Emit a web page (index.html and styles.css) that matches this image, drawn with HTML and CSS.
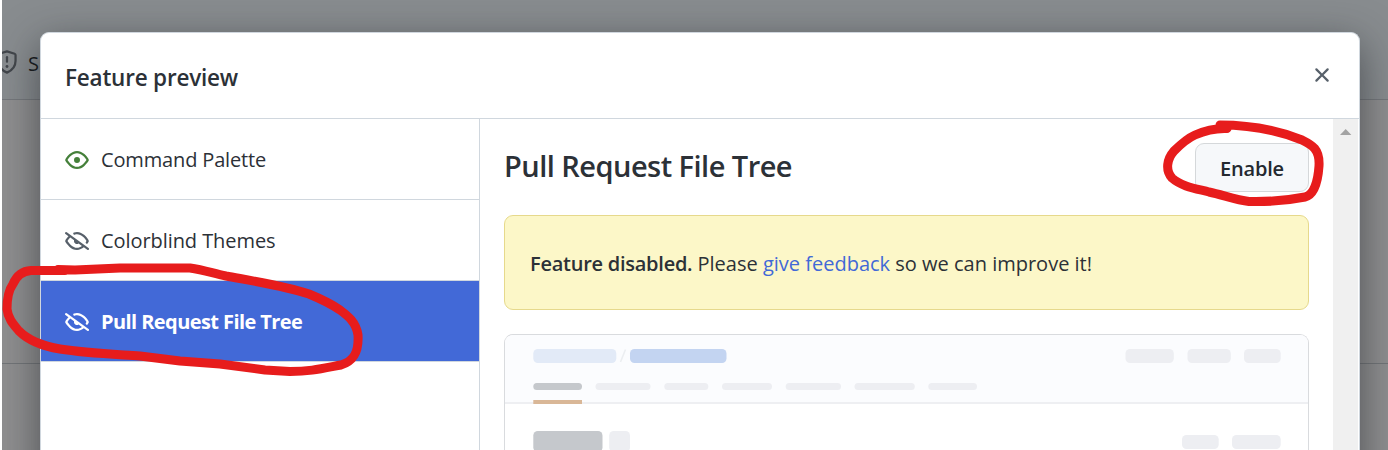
FILE: index.html
```html
<!DOCTYPE html>
<html lang="en">
<head>
<meta charset="utf-8">
<title>Feature preview</title>
<link rel="stylesheet" href="styles.css">
</head>
<body>
<div class="page">
  <div class="repo-nav">
    <svg class="shield" width="24" height="24" viewBox="0 0 16 16" fill="none" stroke="currentColor" stroke-width="1.5" stroke-linecap="round"><path d="M8 .9 13.1 2.5Q13.7 2.7 13.7 3.4V7.2C13.7 10.8 11.5 13.6 8 15.1 4.5 13.6 2.3 10.8 2.3 7.2V3.4Q2.3 2.7 2.9 2.5Z" stroke-linejoin="round"/><path d="M8 4.8V7.8"/><path d="M8 10.9V11" stroke-width="1.9"/></svg>
    <span>S</span>
  </div>
  <div class="repo-head"></div>
</div>

<div class="dialog">
  <header class="dialog-header">
    <h1 class="dialog-title">Feature preview</h1>
    <svg class="close" width="24" height="24" viewBox="0 0 16 16" fill="currentColor"><path d="M3.72 3.72a.75.75 0 011.06 0L8 6.94l3.22-3.22a.75.75 0 111.06 1.06L9.06 8l3.22 3.22a.75.75 0 11-1.06 1.06L8 9.06l-3.22 3.22a.75.75 0 01-1.06-1.06L6.94 8 3.72 4.78a.75.75 0 010-1.06z"/></svg>
  </header>
  <div class="dialog-body">
    <nav class="features">
      <div class="feature">
        <svg class="icon icon-on" width="24" height="24" viewBox="0 0 16 16" fill="currentColor"><path fill-rule="evenodd" d="M1.679 7.932c.412-.621 1.242-1.75 2.366-2.717C5.175 4.242 6.527 3.5 8 3.5c1.473 0 2.824.742 3.955 1.715 1.124.967 1.954 2.096 2.366 2.717a.119.119 0 010 .136c-.412.621-1.242 1.75-2.366 2.717C10.825 11.758 9.473 12.5 8 12.5c-1.473 0-2.824-.742-3.955-1.715C2.92 9.818 2.09 8.69 1.679 8.068a.119.119 0 010-.136zM8 2c-1.981 0-3.67.992-4.933 2.078C1.797 5.169.88 6.423.43 7.1a1.619 1.619 0 000 1.798c.45.678 1.367 1.932 2.637 3.024C4.329 13.008 6.019 14 8 14c1.981 0 3.67-.992 4.933-2.078 1.27-1.091 2.187-2.345 2.637-3.023a1.619 1.619 0 000-1.798c-.45-.678-1.367-1.932-2.637-3.023C11.671 2.992 9.981 2 8 2zm0 8a2 2 0 100-4 2 2 0 000 4z"/></svg>
        <span class="name-palette">Command Palette</span>
      </div>
      <div class="feature">
        <svg class="icon" width="24" height="24" viewBox="0 0 16 16" fill="currentColor"><path id="eye-closed" fill-rule="evenodd" d="M.143 2.31a.75.75 0 011.047-.167l14.5 10.5a.75.75 0 11-.88 1.214l-2.248-1.628C11.346 13.19 9.792 14 8 14c-1.981 0-3.67-.992-4.933-2.078C1.797 10.832.88 9.577.43 8.9a1.618 1.618 0 010-1.797c.353-.533.995-1.42 1.868-2.305L.31 3.357A.75.75 0 01.143 2.31zm3.386 3.378a14.21 14.21 0 00-1.85 2.244.12.12 0 00-.022.068c0 .021.006.045.022.068.412.621 1.242 1.75 2.366 2.717C5.175 11.758 6.527 12.5 8 12.5c1.195 0 2.31-.488 3.29-1.191L9.063 9.695A2 2 0 016.058 7.52L3.529 5.688zM8 3.5c-.516 0-1.017.09-1.499.251a.75.75 0 11-.473-1.423A6.23 6.23 0 018 2c1.981 0 3.67.992 4.933 2.078 1.27 1.091 2.187 2.345 2.637 3.023a1.619 1.619 0 010 1.798c-.11.166-.248.365-.41.587a.75.75 0 11-1.21-.887c.148-.201.272-.382.371-.53a.119.119 0 000-.137c-.412-.621-1.242-1.75-2.366-2.717C10.825 4.242 9.473 3.5 8 3.5z"/></svg>
        <span class="name-themes">Colorblind Themes</span>
      </div>
      <div class="feature feature-selected">
        <svg class="icon" width="24" height="24" viewBox="0 0 16 16" fill="currentColor"><use href="#eye-closed"/></svg>
        <span class="name-tree">Pull Request File Tree</span>
      </div>
    </nav>
    <main class="content">
      <div class="content-head">
        <h2 class="content-title">Pull Request File Tree</h2>
        <button class="button"><span>Enable</span></button>
      </div>
      <div class="flash"><p><b>Feature disabled.</b> Please <a>give feedback</a> so we can improve it!</p></div>
      <div class="preview">
        <svg width="803" height="115" viewBox="505 335 803 115">
          <rect x="505" y="335" width="803" height="67" fill="#fbfcfe"/>
          <rect x="505" y="402" width="803" height="2" fill="#eeeff2"/>
          <rect x="533.3" y="349" width="83" height="14" rx="4.5" fill="#e2eaf7"/>
          <path d="M620.5 362 625.5 349.5" stroke="#eceef1" stroke-width="1.6"/>
          <rect x="630" y="349" width="96.5" height="14" rx="4.5" fill="#c3d4f1"/>
          <rect x="533.3" y="383" width="48.7" height="7" rx="3.5" fill="#c5c8cc"/>
          <rect x="533.3" y="400" width="48.7" height="4" fill="#d9b797"/>
          <g fill="#edeef2">
            <rect x="595.5" y="383" width="55" height="7" rx="3.5"/>
            <rect x="664.3" y="383" width="44" height="7" rx="3.5"/>
            <rect x="722" y="383" width="50" height="7" rx="3.5"/>
            <rect x="785.7" y="383" width="55.3" height="7" rx="3.5"/>
            <rect x="854.5" y="383" width="60.3" height="7" rx="3.5"/>
            <rect x="928.3" y="383" width="48.7" height="7" rx="3.5"/>
            <rect x="1125.5" y="349" width="48.3" height="14" rx="4.5"/>
            <rect x="1187.5" y="349" width="43.3" height="14" rx="4.5"/>
            <rect x="1244" y="349" width="36.7" height="14" rx="4.5"/>
            <rect x="609.2" y="431" width="20.8" height="21" rx="4.5"/>
            <rect x="1182" y="435" width="36.7" height="14" rx="4.5"/>
            <rect x="1232" y="435" width="48.7" height="14" rx="4.5"/>
          </g>
          <rect x="533.3" y="431" width="69.2" height="21" rx="4.5" fill="#c5c8cc"/>
        </svg>
      </div>
    </main>
    <div class="scrollbar"><svg width="12" height="6" viewBox="0 0 12 6"><path d="M0 6 5.7 0 11.4 6Z" fill="#a3a3a3"/></svg></div>
  </div>
</div>

<svg class="marker" width="1388" height="450" viewBox="0 0 1388 450">
  <path d="M65 270.500H31C22 271 16 277 13 284 8 291 7 300 7 309 8 319 14 325 19 331 28 340 42 346 60 349 85 353 110 354 140 356L180 361 220 364 265 370 290 371.500C310 371.500 320 369 341 365 354 361 359 352 358 335 356 322 348 316 340 310 330 303 321 299 309 294 285 286 253 281 226 276 212 273 204 270 190 268H120L75 270 58 269.500"/>
  <path d="M1227 128.500C1215 128 1204 131 1195 135 1186 139 1180 145 1174 151 1167 159 1165 170 1172 178 1182 187 1198 189 1209 192 1223 195 1236 200 1249 201.500 1272 202 1290 200 1305 197 1314 195 1318 181 1319 166 1320 149 1312 145 1302 140 1282 132 1252 125 1220 125"/>
</svg>
</body>
</html>
```
FILE: styles.css
```css
* { box-sizing: border-box; }
body {
  margin: 0;
  height: 450px;
  overflow: hidden;
  background: #fff;
  color: #2c3137;
  font: 20px/30px "Open Sans", "Noto Sans", sans-serif;
}
h1, h2, p { margin: 0; }
svg { display: block; flex: none; }

.page {
  position: relative;
  margin-left: 2px;
  height: 450px;
  overflow: hidden;
  background: #8f8f90;
}
/* Shadow of the dialog, which continues below the window. */
.page::after {
  content: "";
  position: absolute;
  left: 38px;
  top: 32px;
  width: 1320px;
  height: 600px;
  border-radius: 9px;
  box-shadow: 0 12px 42px rgba(40, 43, 47, .65);
}
.repo-nav {
  display: flex;
  height: 100px;
  padding: 49px 0 0;
  gap: 14px;
  background: #888c8f;
  border-bottom: 1px solid #74777b;
  color: #14171a;
}
.shield { margin: 1px 0 0 -7px; color: #42464b; }
.repo-nav span { margin-left: -5px; }
.repo-head { height: 264px; border-bottom: 1px solid #727578; }

/* The dialog floats over the dimmed page. */
.dialog {
  position: absolute;
  left: 40px;
  top: 32px;
  width: 1320px;
  height: 418px;
  background: #fff;
  border: 1px solid #d0d7de;
  border-bottom: 0;
  border-radius: 9px 9px 0 0;
  overflow: hidden;
}
.dialog-header {
  display: flex;
  justify-content: space-between;
  height: 86px;
  padding: 30px 25px 0 24px;
  border-bottom: 1px solid #d0d7de;
}
.dialog-title {
  font-size: 22.5px;
  font-weight: 600;
  line-height: 30px;
  letter-spacing: -.2px;
}
.close { color: #57606a; }
.dialog-body { display: flex; height: 331px; }

.features { width: 439px; border-right: 1px solid #d0d7de; }
.feature {
  display: flex;
  align-items: center;
  gap: 12px;
  height: 81px;
  padding: 2px 0 0 24px;
  border-bottom: 1px solid #d0d7de;
}
.icon { color: #57606a; }
.icon-on { color: #45803a; }
.feature-selected { background: #4269d7; color: #fff; font-weight: 700; }
.feature-selected .icon { color: #fff; }
.name-palette { letter-spacing: -.15px; }
.name-themes { letter-spacing: -.07px; }
.name-tree { letter-spacing: -.58px; }

.content { width: 853px; height: 331px; padding: 24px 24px 0; overflow: hidden; }
.content-head { display: flex; justify-content: space-between; height: 72px; }
.content-title { font-size: 29px; line-height: 46px; font-weight: 600; letter-spacing: -.53px; }
.button {
  width: 114px;
  height: 49px;
  padding: 2px 0 0;
  border: 1px solid #d5d8da;
  border-radius: 9px;
  background: #f6f8fa;
  color: #24292f;
  font: 600 20px/30px "Open Sans", sans-serif;
  letter-spacing: -.2px;
}
.flash {
  height: 95px;
  padding: 33px 25px 0;
  margin-bottom: 24px;
  border: 1px solid #e6d98c;
  border-radius: 9px;
  background: #fcf7c8;
  white-space: nowrap;
}
.flash b { font-weight: 600; letter-spacing: -.25px; }
.flash a { color: #4269d7; }
.preview {
  height: 116px;
  border: 1px solid #d9dbde;
  border-bottom: 0;
  border-radius: 9px 9px 0 0;
  overflow: hidden;
}

.scrollbar { width: 25px; height: 331px; padding: 10px 0 0 7px; background: #f0f0f0; }

/* Freehand highlights drawn over everything. */
.marker {
  position: absolute;
  left: 0;
  top: 0;
  fill: none;
  stroke: #e71c1c;
  stroke-width: 9;
  stroke-linecap: round;
  stroke-linejoin: round;
}
```
